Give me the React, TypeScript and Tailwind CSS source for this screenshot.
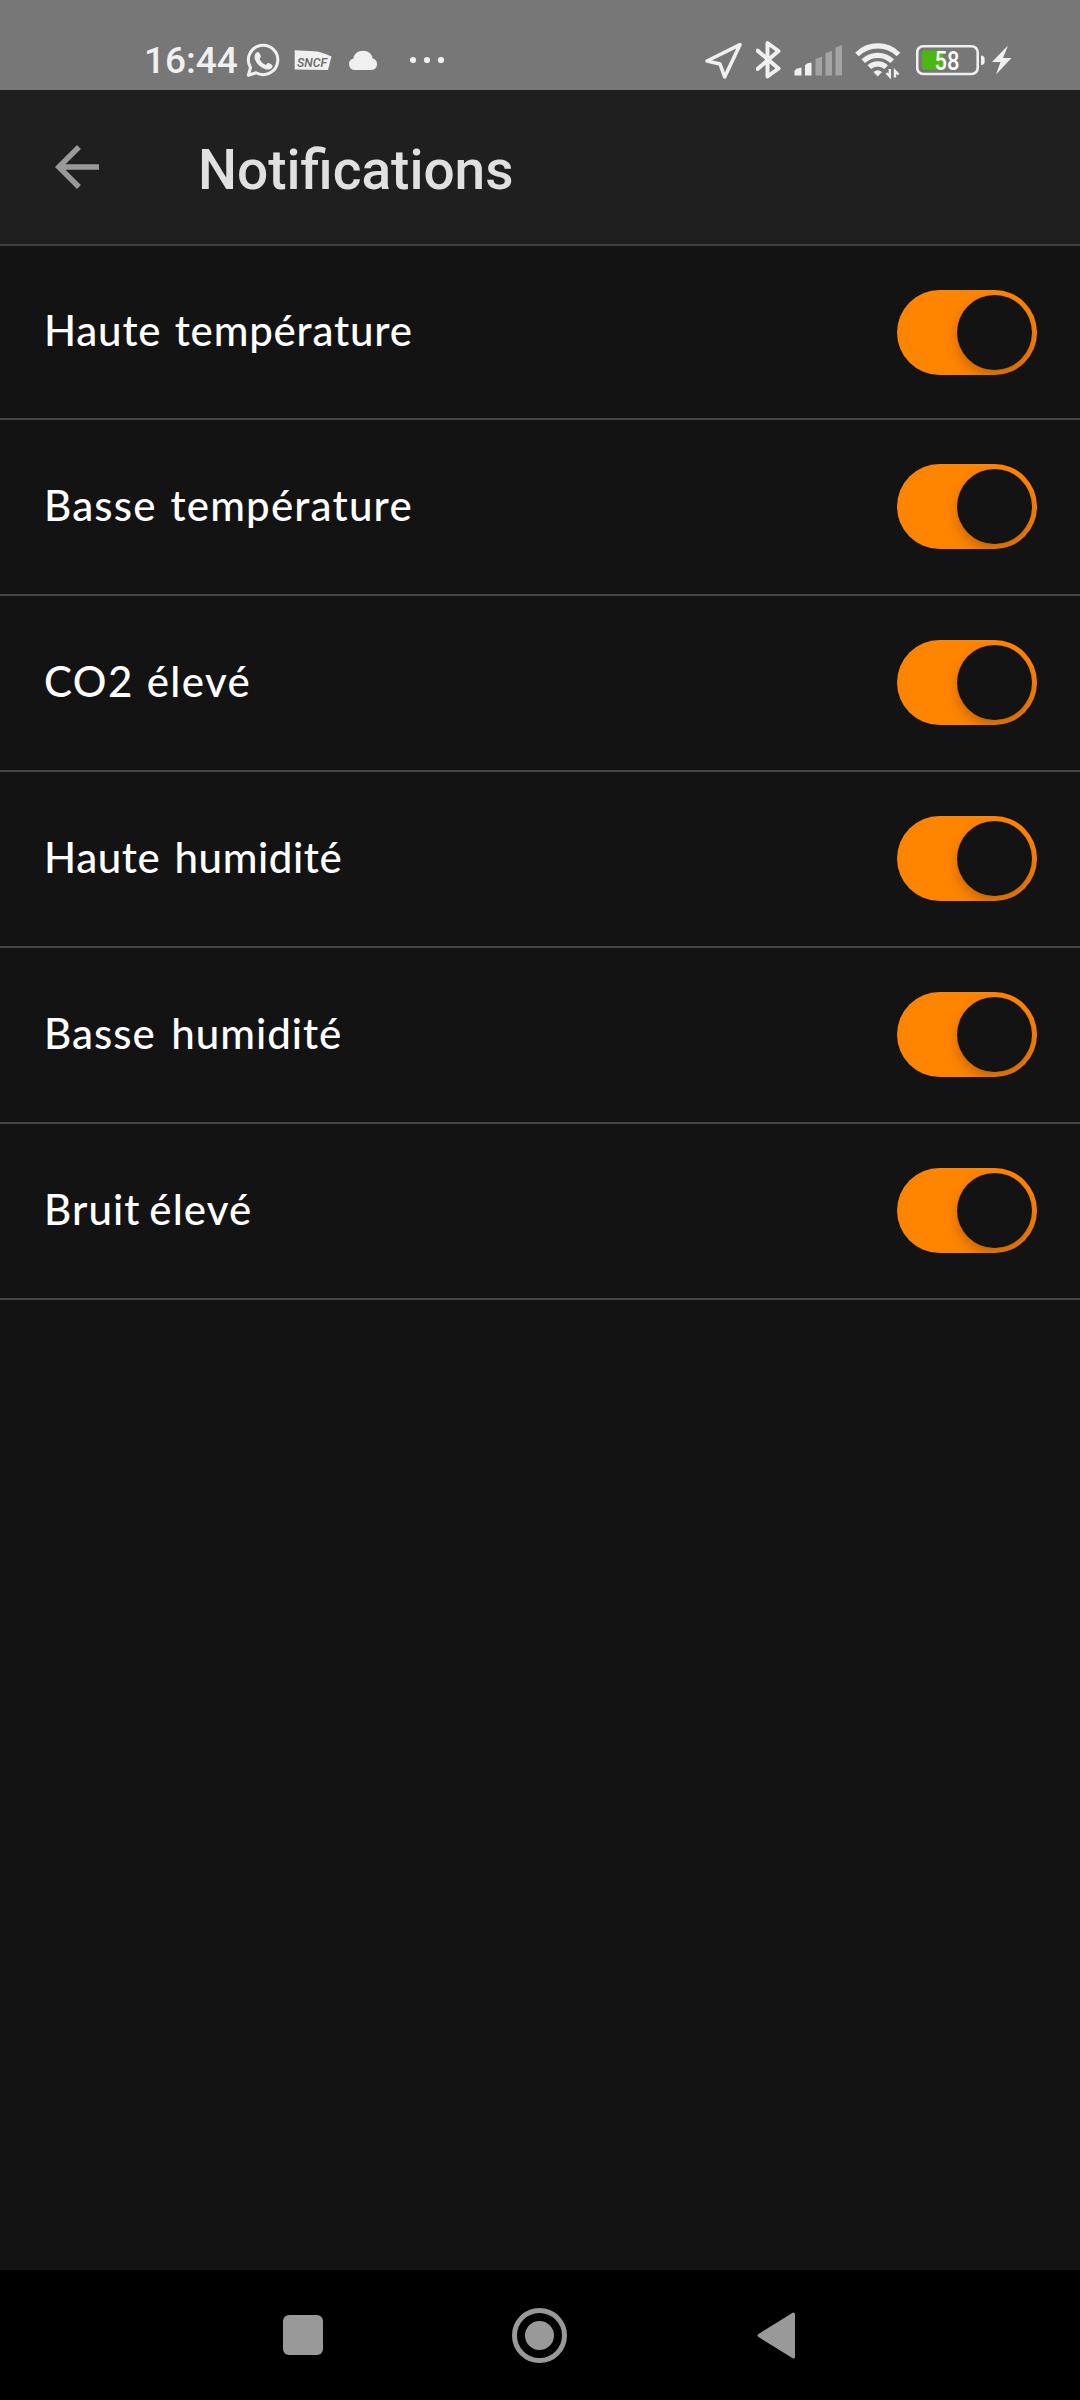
import { useState } from 'react';

interface NotificationSetting {
  id: string;
  label: string;
  spacing: string;
}

const SETTINGS: NotificationSetting[] = [
  { id: 'temp-high', label: 'Haute température', spacing: 'tracking-[0.8px] [word-spacing:2px]' },
  { id: 'temp-low', label: 'Basse température', spacing: 'tracking-[1.2px] [word-spacing:2px]' },
  { id: 'co2-high', label: 'CO2 élevé', spacing: 'tracking-[1.4px] [word-spacing:1px]' },
  { id: 'humidity-high', label: 'Haute humidité', spacing: 'tracking-[0.6px] [word-spacing:3px]' },
  { id: 'humidity-low', label: 'Basse humidité', spacing: 'tracking-[1px] [word-spacing:4px]' },
  { id: 'noise-high', label: 'Bruit élevé', spacing: 'tracking-[1.1px] [word-spacing:-3px]' }
];

const StatusBar = () => (
  <div className="flex h-[90px] shrink-0 items-start bg-[#777777] pt-10 pl-[144px] text-[#f0f0f0]">
    <span className="w-[101px] font-['Roboto',sans-serif] text-[37px] leading-[42px] font-medium">16:44</span>

    {/* whatsapp */}
    <svg className="h-10 w-[36px]" viewBox="245 40 36 40" fill="none">
      <path
        d="M248.300 75.300 L250.500 67.500 A14.700 14.700 0 1 1 256 72.800 Z"
        stroke="currentColor"
        strokeWidth="3"
        strokeLinejoin="round"
      />
      <path
        d="M256.500 52.500c1-.9 2.300-.8 2.900.4l1.400 3.100c.3.900-.2 1.600-1.300 2.900 1.500 2.900 3.600 4.800 6.500 6 1.200-1.500 1.800-2.200 2.700-1.800l3.100 1.600c1.100.6.9 1.800.1 3-1.400 1.800-3.800 2.400-6.400 1.500-5.200-1.700-8.700-5.200-10.500-9.700-.9-2.900-.3-5.400 1.500-7z"
        fill="currentColor"
      />
    </svg>

    {/* sncf */}
    <svg className="ml-[13px] h-10 w-[39px]" viewBox="294 40 39 40">
      <path d="M294.700 50.300 L315 51.300 Q322 52 331.500 56.500 L328 70 L294.700 69.500 Z" fill="currentColor" />
      <text
        x="297"
        y="66.500"
        textLength="30"
        lengthAdjust="spacingAndGlyphs"
        className="fill-[#686868] font-['Roboto',sans-serif] text-[13px] font-medium italic"
      >
        SNCF
      </text>
    </svg>

    {/* cloud */}
    <svg className="ml-4 h-10 w-[29px]" viewBox="349 40 29 40" fill="currentColor">
      <path d="M355 70a5.800 5.800 0 0 1-1.600-11.400C354 53.500 358 50.700 363 50.700s9 2.800 9.700 7.900A5.800 5.800 0 0 1 371.500 70z" />
    </svg>

    <svg className="ml-8 h-10 w-[35px]" viewBox="410 40 35 40" fill="currentColor">
      <circle cx="413" cy="60" r="3.100" />
      <circle cx="427" cy="60" r="3.100" />
      <circle cx="441" cy="60" r="3.100" />
    </svg>

    {/* location */}
    <svg className="ml-[259px] h-10 w-10" viewBox="704 40 40 40" fill="none">
      <path
        d="M740 44.700 L707 61 L720 64 L724.700 77 Z"
        stroke="currentColor"
        strokeWidth="3.600"
        strokeLinejoin="round"
      />
    </svg>

    {/* bluetooth */}
    <svg className="ml-3 h-10 w-[26px]" viewBox="756 40 26 40" fill="none">
      <path
        d="M757.500 50.500 L778.500 68.500 L767.500 76.500 V43 L778.500 51 L757.500 69"
        stroke="currentColor"
        strokeWidth="4"
        strokeLinejoin="round"
        strokeLinecap="round"
      />
    </svg>

    {/* mobile signal */}
    <svg className="ml-3 h-10 w-[49px]" viewBox="794 40 49 40" fill="currentColor">
      <path d="M794.500 70.500 Q797 68 801.500 67.500 V75.500 H794.500 Z" />
      <path d="M805 65 Q807.500 62.800 811.500 62.500 V75.500 H805 Z" />
      <g className="fill-[#a3a3a3]">
        <path d="M815.500 59 L822 56.500 V75.500 H815.500 Z" />
        <path d="M825.500 53 L832 51 V75.500 H825.500 Z" />
        <path d="M835.500 47.500 L842 45 V75.500 H835.500 Z" />
      </g>
    </svg>

    {/* wifi */}
    <svg className="ml-[11px] h-10 w-[48px]" viewBox="854 40 48 40" fill="none" stroke="currentColor" strokeWidth="5.200">
      <path d="M857 54.500 A29.500 29.500 0 0 1 898.500 54.500" />
      <path d="M863.200 61.200 A21 21 0 0 1 892.300 61.200" />
      <path d="M869.300 67.200 A12.500 12.500 0 0 1 886.200 67.200" />
      <path d="M873.500 72 Q877.700 68.500 882 72 L877.700 76.500 Z" fill="currentColor" stroke="none" />
      <path d="M889.800 69 V76.500 L886.500 73 M895 77.500 V71 L898.500 74.500" strokeWidth="2.400" />
    </svg>

    {/* battery */}
    <svg className="ml-[14px] h-10 w-[70px]" viewBox="916 40 70 40">
      <rect x="917.200" y="46.200" width="60.500" height="27.800" rx="6" fill="none" stroke="currentColor" strokeWidth="2.600" />
      <path d="M925 50.500 H943 V69.500 H925 Q922 69.500 922 66.500 V53.500 Q922 50.500 925 50.500 Z" fill="#4cb711" />
      <path d="M981 55.500 Q984.700 55.500 984.700 59 V61.500 Q984.700 65 981 65 Z" fill="currentColor" />
      <text
        x="934.500"
        y="69.500"
        textLength="25"
        lengthAdjust="spacingAndGlyphs"
        className="fill-white font-['Roboto',sans-serif] text-[25px] font-medium"
      >
        58
      </text>
    </svg>

    {/* charging */}
    <svg className="ml-1.5 h-10 w-5" viewBox="992 40 20 40" fill="currentColor">
      <path d="M1008 45.500 L992 62 H1000.500 L996 74.500 L1011.500 58 H1003 Z" />
    </svg>
  </div>
);

const Header = () => (
  <header className="flex h-[156px] shrink-0 items-center border-b-2 border-[#414141] bg-[#1f1f1f] pl-[44px]">
    <button type="button" aria-label="Retour" className="text-[#999999]">
      <svg className="size-[66px]" viewBox="0 0 24 24" fill="currentColor">
        <path d="M20 11H7.830l5.590-5.590L12 4l-8 8 8 8 1.410-1.410L7.830 13H20v-2z" />
      </svg>
    </button>
    <h1 className="mt-1.5 ml-[88px] font-['Roboto',sans-serif] text-[55px] leading-none font-medium text-[#e0e0e0]">
      Notifications
    </h1>
  </header>
);

interface ToggleProps {
  label: string;
  checked: boolean;
  onChange: () => void;
}

const Toggle = ({ label, checked, onChange }: ToggleProps) => (
  <button
    type="button"
    role="switch"
    aria-checked={checked}
    aria-label={label}
    onClick={onChange}
    className={`flex h-[85px] w-[140px] items-center overflow-hidden rounded-full px-[5px] ${
      checked ? 'justify-end bg-[#ff8400]' : 'justify-start bg-[#3a3a3a]'
    }`}
  >
    <span className="size-[75px] rounded-full bg-[#131313] shadow-[0_6px_12px_rgba(0,0,0,0.22)]" />
  </button>
);

const NavigationBar = () => (
  <nav className="flex h-[130px] shrink-0 items-center bg-black pl-[283px] text-[#999999]">
    <span className="size-10 rounded-[6px] bg-[#999999]" />
    <span className="ml-[189px] flex size-[55px] items-center justify-center rounded-full border-[5px] border-[#999999]">
      <span className="size-[29px] rounded-full bg-[#999999]" />
    </span>
    <svg className="ml-[190px] h-[47px] w-[39px]" viewBox="0 0 39 47" fill="currentColor">
      <path
        d="M2 23.500 L36.500 2 V45 Z"
        stroke="currentColor"
        strokeWidth="3"
        strokeLinejoin="round"
      />
    </svg>
  </nav>
);

export default function App() {
  const [disabled, setDisabled] = useState<string[]>([]);

  const toggle = (id: string) => {
    setDisabled((prev) => (prev.includes(id) ? prev.filter((item) => item !== id) : [...prev, id]));
  };

  return (
    <div className="flex h-[2400px] w-[1080px] flex-col overflow-hidden bg-[#131313]">
      <StatusBar />
      <Header />
      <ul className="flex-1">
        {SETTINGS.map((setting) => (
          <li
            key={setting.id}
            className="flex h-[176px] items-center justify-between border-b-2 border-[#484848] pr-[43px] pb-px pl-[44px] first:h-[174px] first:pb-0"
          >
            <span
              className={`pb-1 font-['Lato',sans-serif] text-[42px] leading-[50px] font-medium text-white ${setting.spacing}`}
            >
              {setting.label}
            </span>
            <Toggle
              label={setting.label}
              checked={!disabled.includes(setting.id)}
              onChange={() => toggle(setting.id)}
            />
          </li>
        ))}
      </ul>
      <NavigationBar />
    </div>
  );
}
